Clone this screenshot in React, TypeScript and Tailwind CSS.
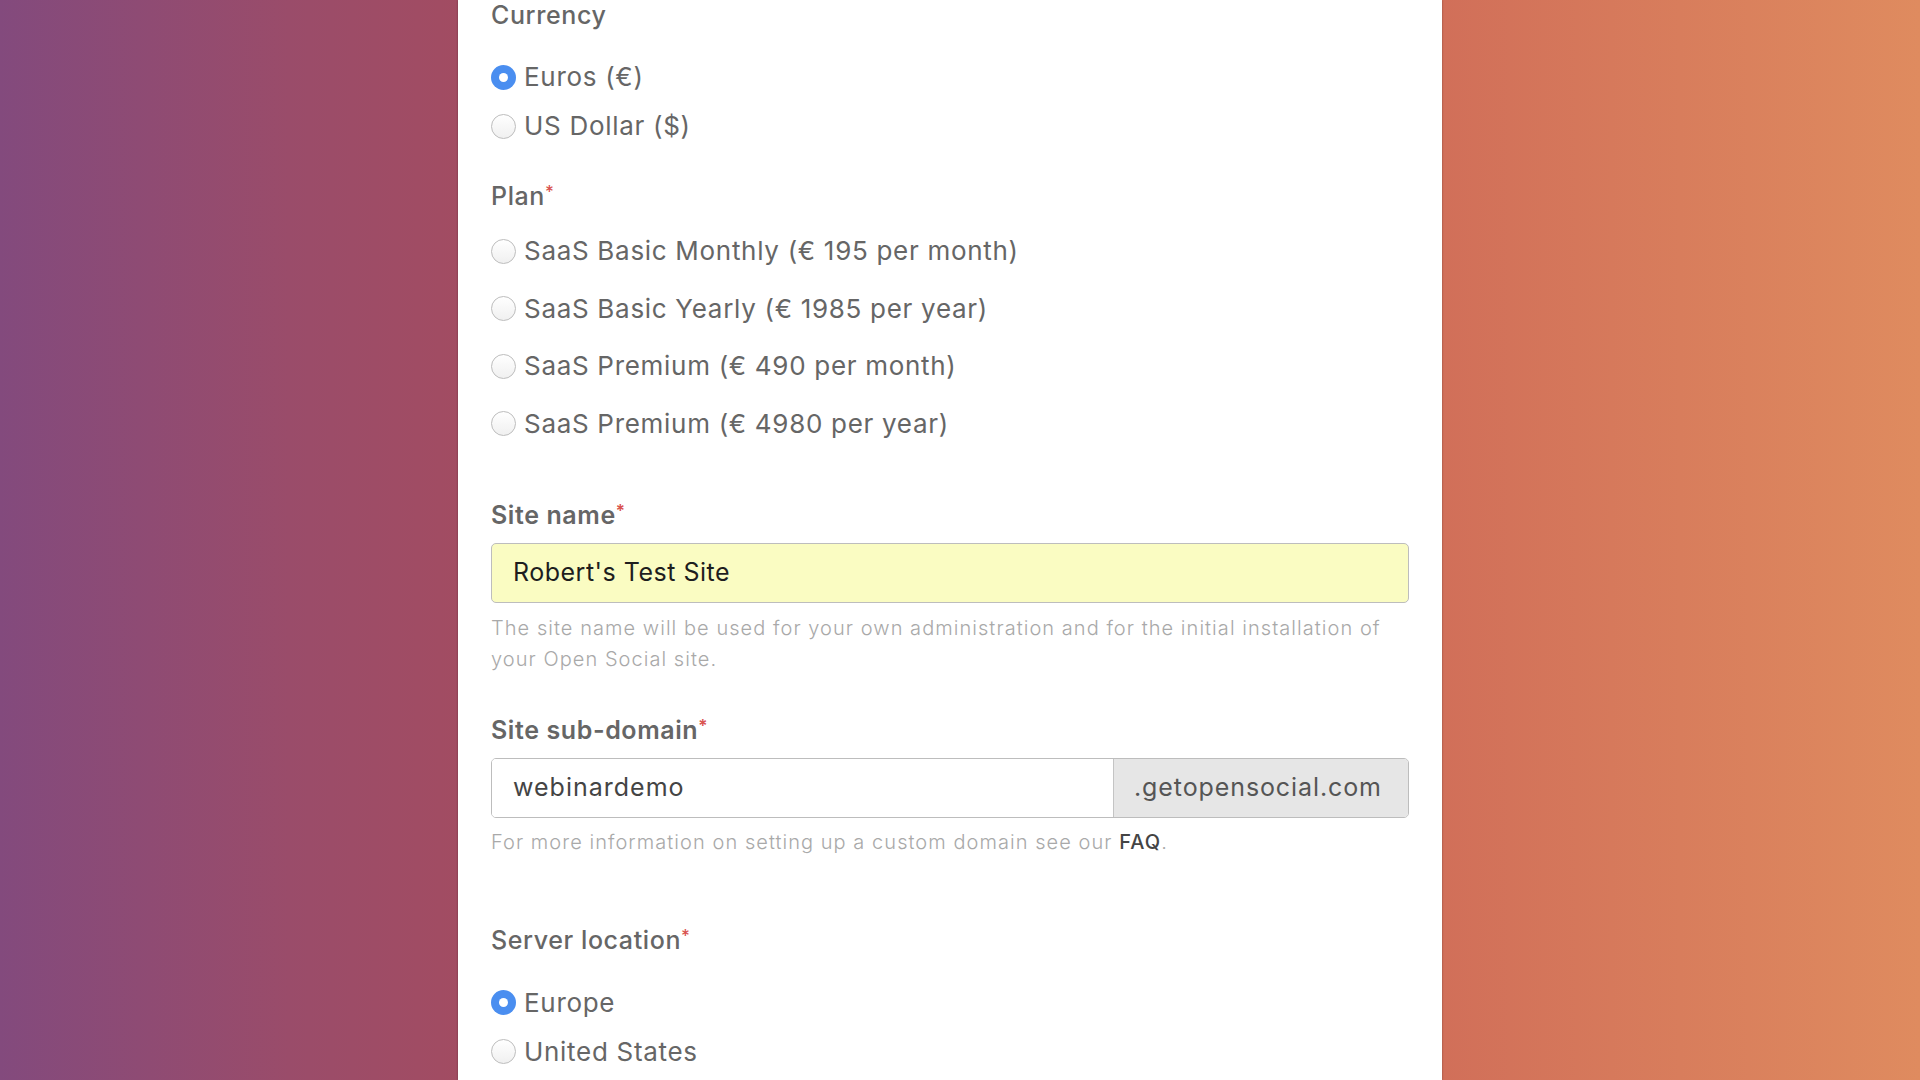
import React from "react";

const font = { fontFamily: "Inter, 'Open Sans', sans-serif" };

function Radio({ checked, label }: { checked?: boolean; label: string }) {
  return (
    <div className="flex items-center h-[40px]">
      {checked ? (
        <span className="w-[25px] h-[25px] rounded-full bg-[#4a8ef0] flex items-center justify-center shrink-0">
          <span className="w-[9px] h-[9px] rounded-full bg-white" />
        </span>
      ) : (
        <span className="w-[25px] h-[25px] rounded-full border border-[#bdbdbd] bg-gradient-to-b from-white to-[#f0f0f0] shrink-0" />
      )}
      <span className="ml-[8px] text-[26px] tracking-[0.7px] text-[#666666] leading-none">{label}</span>
    </div>
  );
}

function Label({ text, required, bold }: { text: string; required?: boolean; bold?: boolean }) {
  return (
    <div className={`h-[30px] leading-[30px] text-[25px] tracking-[0.6px] text-[#666666] ${bold ? "font-semibold" : "font-medium"}`}>
      {text}
      {required && <span className="text-[#d9534f] text-[17px] align-top relative top-[-4px] tracking-normal">*</span>}
    </div>
  );
}

export default function App() {
  return (
    <div
      className="w-[1920px] h-[1080px] overflow-hidden bg-[linear-gradient(90deg,#834a7d_0%,#9a4c6a_15%,#a24c62_24%,#d16f59_75%,#df8b5f_100%)]"
      style={font}
    >
      <div className="ml-[458px] w-[984px] h-full bg-white shadow-[0_0_2px_rgba(0,0,0,0.35)] px-[33px]">
        {/* Currency */}
        <Label text="Currency" />
        <div className="mt-[27px] flex flex-col gap-[9px]">
          <Radio checked label="Euros (€)" />
          <Radio label="US Dollar ($)" />
        </div>

        {/* Plan */}
        <div className="mt-[35px]">
          <Label text="Plan" required />
        </div>
        <div className="mt-[20px] flex flex-col gap-[17.5px]">
          <Radio label="SaaS Basic Monthly (€ 195 per month)" />
          <Radio label="SaaS Basic Yearly (€ 1985 per year)" />
          <Radio label="SaaS Premium (€ 490 per month)" />
          <Radio label="SaaS Premium (€ 4980 per year)" />
        </div>

        {/* Site name */}
        <div className="mt-[56.5px]">
          <Label text="Site name" required bold />
        </div>
        <div className="mt-[13px] h-[60px] rounded-[5px] border border-[#bdbdbd] bg-[#fafcc2] flex items-center px-[21px] text-[25px] tracking-[0.5px] text-[#1e1e1e]">
          Robert's Test Site
        </div>
        <div className="mt-[10px] text-[20px] tracking-[1.05px] leading-[30.5px] text-[#a9a9a9] font-light">
          The site name will be used for your own administration and for the initial installation of
          <br />
          your Open Social site.
        </div>

        {/* Sub-domain */}
        <div className="mt-[40.5px]">
          <Label text="Site sub-domain" required bold />
        </div>
        <div className="mt-[13.5px] h-[60px] rounded-[5px] border border-[#bdbdbd] flex overflow-hidden">
          <div className="flex-1 flex items-center px-[21px] text-[25px] tracking-[1px] text-[#444444] bg-white">webinardemo</div>
          <div className="w-[295px] border-l border-[#c4c4c4] bg-[#e6e6e6] flex items-center pl-[20px] text-[25px] tracking-[0.9px] text-[#555555]">
            .getopensocial.com
          </div>
        </div>
        <div className="mt-[9px] text-[20px] tracking-[1.05px] leading-[30px] text-[#a9a9a9] font-light">
          For more information on setting up a custom domain see our{" "}
          <span className="text-[#444444] font-medium">FAQ</span>.
        </div>

        {/* Server location */}
        <div className="mt-[68px]">
          <Label text="Server location" required />
        </div>
        <div className="mt-[27.5px] flex flex-col gap-[9px]">
          <Radio checked label="Europe" />
          <Radio label="United States" />
        </div>
      </div>
    </div>
  );
}
